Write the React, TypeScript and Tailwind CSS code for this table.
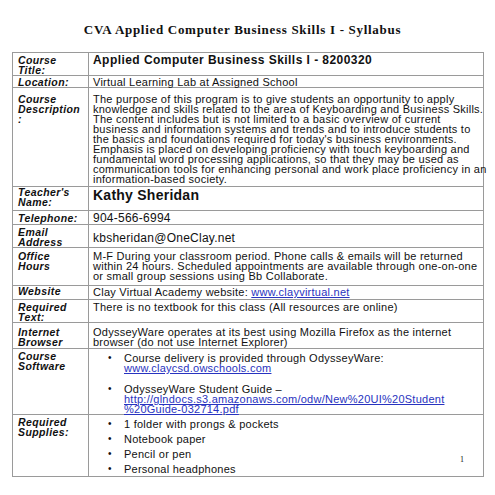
import React from "react";

type Row = {
  label: string[];
  rowClass: string;
  labelClass: string;
  body: React.ReactNode;
  bodyClass: string;
};

const Lines = ({ lines }: { lines: string[] }) => (
  <>
    {lines.map((l, i) => (
      <div key={i} className="whitespace-nowrap">{l}</div>
    ))}
  </>
);

const A = ({ children }: { children: React.ReactNode }) => (
  <a href="#" className="text-[#2833c0] underline">{children}</a>
);

const Bullet = ({ children }: { children: React.ReactNode }) => (
  <div className="flex">
    <span className="w-[31px] shrink-0 pl-[15px] text-[10px]">•</span>
    <div>{children}</div>
  </div>
);

const rows: Row[] = [
  {
    label: ["Course", "Title:"],
    rowClass: "h-[23px]",
    labelClass: "pt-[2px]",
    bodyClass: "pt-[2px] font-bold text-[12px] tracking-[0.45px]",
    body: "Applied Computer Business Skills I - 8200320",
  },
  {
    label: ["Location:"],
    rowClass: "h-[12px]",
    labelClass: "pt-[1px]",
    bodyClass: "pt-[1px]",
    body: "Virtual Learning Lab at Assigned School",
  },
  {
    label: ["Course", "Description", ":"],
    rowClass: "h-[99px]",
    labelClass: "pt-[6px]",
    bodyClass: "pt-[6px]",
    body: (
      <Lines
        lines={[
          "The purpose of this program is to give students an opportunity to apply",
          "knowledge and skills related to the area of Keyboarding and Business Skills.",
          "The content includes but is not limited to a basic overview of current",
          "business and information systems and trends and to introduce students to",
          "the basics and foundations required for today's business environments.",
          "Emphasis is placed on developing proficiency with touch keyboarding and",
          "fundamental word processing applications, so that they may be used as",
          "communication tools for enhancing personal and work place proficiency in an",
          "information-based society.",
        ]}
      />
    ),
  },
  {
    label: ["Teacher's", "Name:"],
    rowClass: "h-[24px]",
    labelClass: "pt-[0px]",
    bodyClass: "pt-[1px] font-bold text-[14px] leading-[14px] tracking-[0.5px]",
    body: "Kathy Sheridan",
  },
  {
    label: ["Telephone:"],
    rowClass: "h-[14px]",
    labelClass: "pt-[2px]",
    bodyClass: "pt-[2px] text-[12px] tracking-[0.5px]",
    body: "904-566-6994",
  },
  {
    label: ["Email", "Address"],
    rowClass: "h-[23px]",
    labelClass: "pt-[2px]",
    bodyClass: "pt-[8px] text-[12px] tracking-[0.6px]",
    body: "kbsheridan@OneClay.net",
  },
  {
    label: ["Office", "Hours"],
    rowClass: "h-[38px]",
    labelClass: "pt-[3px]",
    bodyClass: "pt-[3px]",
    body: (
      <Lines
        lines={[
          "M-F During your classroom period. Phone calls & emails will be returned",
          "within 24 hours. Scheduled appointments are available through one-on-one",
          "or small group sessions using Bb Collaborate.",
        ]}
      />
    ),
  },
  {
    label: ["Website"],
    rowClass: "h-[14px]",
    labelClass: "pt-[0px]",
    bodyClass: "pt-[1px]",
    body: (
      <div className="whitespace-nowrap">
        Clay Virtual Academy website: <A>www.clayvirtual.net</A>
      </div>
    ),
  },
  {
    label: ["Required", "Text:"],
    rowClass: "h-[23px]",
    labelClass: "pt-[2px]",
    bodyClass: "pt-[2px]",
    body: "There is no textbook for this class (All resources are online)",
  },
  {
    label: ["Internet", "Browser"],
    rowClass: "h-[26px]",
    labelClass: "pt-[4px]",
    bodyClass: "pt-[4px]",
    body: (
      <Lines
        lines={[
          "OdysseyWare operates at its best using Mozilla Firefox as the internet",
          "browser (do not use Internet Explorer)",
        ]}
      />
    ),
  },
  {
    label: ["Course", "Software"],
    rowClass: "h-[66px]",
    labelClass: "pt-[2px]",
    bodyClass: "pt-[4px]",
    body: (
      <div className="flex flex-col gap-[11px]">
        <Bullet>
          <div className="whitespace-nowrap">Course delivery is provided through OdysseyWare:</div>
          <A>www.claycsd.owschools.com</A>
        </Bullet>
        <Bullet>
          <div className="whitespace-nowrap">OdysseyWare Student Guide –</div>
          <div className="whitespace-nowrap">
            <A>http://glndocs.s3.amazonaws.com/odw/New%20UI%20Student</A>
          </div>
          <A>%20Guide-032714.pdf</A>
        </Bullet>
      </div>
    ),
  },
  {
    label: ["Required", "Supplies:"],
    rowClass: "h-[62px] relative",
    labelClass: "pt-[2px]",
    bodyClass: "pt-[4px]",
    body: (
      <div className="flex flex-col gap-[5px]">
        <Bullet>1 folder with prongs &amp; pockets</Bullet>
        <Bullet>Notebook paper</Bullet>
        <Bullet>Pencil or pen</Bullet>
        <Bullet>Personal headphones</Bullet>
      </div>
    ),
  },
];

export default function App() {
  return (
    <div className="w-[495px] h-[495px] bg-white text-[#111] font-['Liberation_Sans',Arial,sans-serif] overflow-hidden">
      <div className="pt-[22px] pr-[10px] flex justify-center">
        <h1 className="font-['Liberation_Serif','Times_New_Roman',serif] font-bold text-[13px] leading-[16px] tracking-[0.7px]">
          CVA Applied Computer Business Skills I - Syllabus
        </h1>
      </div>
      <div className="ml-[12px] mt-[14px] w-[472px] border-t border-l border-r border-[#9a9a9a]">
        {rows.map((row, i) => (
          <div key={i} className={"flex border-b border-[#9a9a9a] " + row.rowClass}>
            <div className={"w-[76px] shrink-0 border-r border-[#9a9a9a] pl-[5px] font-bold italic text-[10.5px] leading-[10px] tracking-[0.4px] " + row.labelClass}>
              {row.label.map((l, j) => (
                <div key={j}>{l}</div>
              ))}
            </div>
            <div className={"flex-1 pl-[4px] text-[11px] leading-[10px] tracking-[0.25px] " + row.bodyClass}>
              {row.body}
            </div>
            {i === rows.length - 1 && (
              <span className="absolute right-[19px] top-[41px] font-['Liberation_Serif',serif] text-[8px] leading-[8px]">1</span>
            )}
          </div>
        ))}
      </div>
    </div>
  );
}
